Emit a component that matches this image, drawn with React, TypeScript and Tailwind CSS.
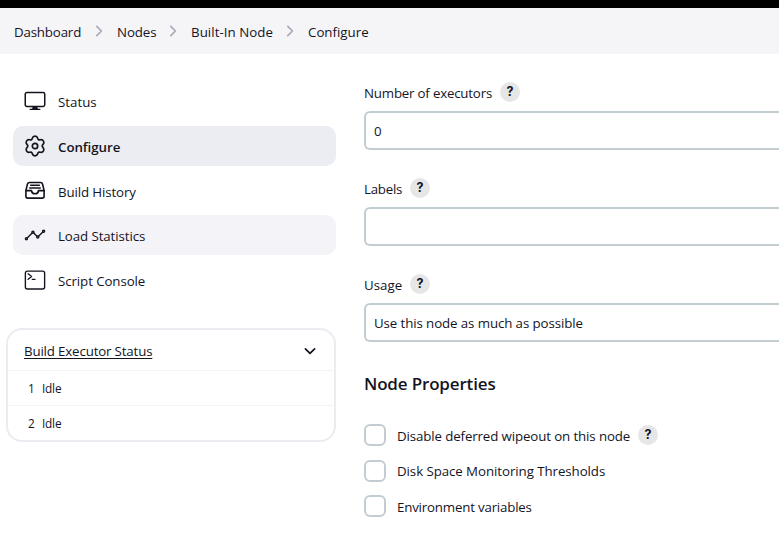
import type { ReactNode } from "react";
import { IoAnalyticsOutline, IoTerminalOutline } from "react-icons/io5";

const crumbs = [
  { label: "Dashboard", className: "w-[67px] tracking-[-0.17px]" },
  { label: "Nodes", className: "w-[38px] tracking-[-0.1px]" },
  { label: "Built-In Node", className: "w-[81px] tracking-[0.05px]" },
  { label: "Configure", className: "w-[60px]" },
];

function Monitor({ className }: { className?: string }) {
  return (
    <svg viewBox="0 0 22 22" fill="none" stroke="currentColor" strokeLinecap="round" strokeLinejoin="round" className={className}>
      <rect x="1.25" y="2.6" width="19.5" height="13.8" rx="1.7" strokeWidth="1.5" />
      <path d="M6.2 19.4h9.6" strokeWidth="1.3" />
      <path d="M9 17l-.4 2h4.8l-.4-2z" fill="currentColor" strokeWidth="0.8" />
    </svg>
  );
}

// Six rounded lobes around the centre of a 22 by 22 box.
function gearOutline() {
  const lobe = [[8.9, 3.9], [7.6, 1.2], [11, 1.2], [14.4, 1.2], [13.1, 3.9], [14.6, 4.76]];
  let path = "M7.4 4.76";
  for (let k = 0; k < 6; k++) {
    const a = (k * Math.PI) / 3;
    const pts = lobe.map(([x, y]) => {
      const dx = x - 11;
      const dy = y - 11;
      const px = 11 + dx * Math.cos(a) - dy * Math.sin(a);
      const py = 11 + dx * Math.sin(a) + dy * Math.cos(a);
      return px.toFixed(2) + " " + py.toFixed(2);
    });
    path += "C" + pts.join(" ");
  }
  return path + "Z";
}

const gearPath = gearOutline();

function Gear({ className }: { className?: string }) {
  return (
    <svg viewBox="0 0 22 22" fill="none" stroke="currentColor" strokeWidth="1.7" strokeLinejoin="round" className={className}>
      <path d={gearPath} />
      <circle cx="11" cy="11" r="2.7" />
    </svg>
  );
}

function Tray({ className }: { className?: string }) {
  return (
    <svg viewBox="0 -0.6 22 22" fill="none" stroke="currentColor" strokeWidth="1.6" strokeLinecap="round" strokeLinejoin="round" className={className}>
      <path d="M1.9 11 3.4 4.6Q3.8 2.9 5.5 2.9h11q1.7 0 2.1 1.7L20.1 11v5.6q0 1.9-1.9 1.9H3.8q-1.9 0-1.9-1.9z" />
      <path d="M1.9 11h5.6q.3 3.2 3.5 3.2t3.5-3.2h5.6" />
      <path d="M6.6 5.7h8.8M5.7 8.4h10.6" strokeWidth="1.4" />
    </svg>
  );
}

function Chevron({ className }: { className?: string }) {
  return (
    <svg viewBox="0 0 14 14" fill="none" stroke="currentColor" strokeWidth="1.7" strokeLinecap="round" strokeLinejoin="round" className={className}>
      <path d="M4.8 2.4 9.4 7l-4.6 4.6" />
    </svg>
  );
}

const tasks = [
  { label: "Status", icon: Monitor, className: "" },
  { label: "Configure", icon: Gear, className: "bg-[#ecedf2] font-semibold tracking-[-0.05px]" },
  { label: "Build History", icon: Tray, className: "tracking-[-0.12px]" },
  { label: "Load Statistics", icon: IoAnalyticsOutline, className: "bg-[#f3f3f8] tracking-[-0.09px]" },
  { label: "Script Console", icon: IoTerminalOutline, className: "tracking-[-0.09px]" },
];

function Help() {
  return (
    <span className="flex size-5 shrink-0 items-center justify-center rounded-full bg-[#e6e6e7] pt-px font-[Inter] text-[12.5px] font-bold leading-none tracking-normal">
      ?
    </span>
  );
}

function Field({ label, labelClass, children }: { label: string; labelClass: string; children?: ReactNode }) {
  return (
    <div className="h-24">
      <div className="flex h-5 items-center">
        <span className={"pt-px " + labelClass}>{label}</span>
        <Help />
      </div>
      <div className="mt-[9px] flex h-[39px] items-center rounded-l-md border-2 border-r-0 border-[#c3cdd1] pl-2 pt-px tracking-[-0.1px]">
        {children}
      </div>
    </div>
  );
}

function Check({ label, labelClass, help }: { label: string; labelClass: string; help?: boolean }) {
  return (
    <div className="flex h-[22px] items-center">
      <span className="size-[22px] shrink-0 rounded-md border-2 border-[#c3cdd1]" />
      <span className={"ml-[11px] pt-px " + labelClass}>{label}</span>
      {help && <Help />}
    </div>
  );
}

export default function App() {
  return (
    <div className="h-[537px] w-[779px] overflow-hidden whitespace-nowrap bg-white font-['Open_Sans','Noto_Sans',sans-serif] text-[13.3px] leading-5 text-[#14141f]">
      <div className="h-2 bg-black" />
      <nav className="flex h-[46px] items-center bg-[#f5f5f8] pl-3.5">
        {crumbs.map((crumb, i) => (
          <div key={crumb.label} className="flex items-center">
            {i > 0 && (
              <span className="flex w-9 justify-center">
                <Chevron className="size-3.5 text-[#a9a9b8]" />
              </span>
            )}
            <span className={crumb.className + " pt-px"}>{crumb.label}</span>
          </div>
        ))}
      </nav>
      <div className="flex">
        <aside className="w-[364px] shrink-0 pt-[27px]">
          <div className="ml-[13px] flex w-[323px] flex-col gap-[4.7px]">
            {tasks.map(({ label, icon: Icon, className }) => (
              <div key={label} className={"flex h-10 items-center rounded-[10px] pl-[11px] " + className}>
                <Icon className="size-[22px]" />
                <span className="ml-3 pt-[2.5px]">{label}</span>
              </div>
            ))}
          </div>
          <section className="ml-1.5 mt-7 h-[114px] w-[330px] rounded-2xl border-2 border-[#ecebf1]">
            <div className="flex h-10 items-center justify-between pl-4 pr-[17px] pt-0.5">
              <span className="tracking-[-0.16px] underline underline-offset-2">Build Executor Status</span>
              <Chevron className="size-3.5 rotate-90" />
            </div>
            <div className="flex h-[35px] items-center border-t border-[#f3f3f6] pl-5 text-[11.8px] tracking-[-0.2px]">
              <span className="w-3.5">1</span>Idle
            </div>
            <div className="flex h-[35px] items-center border-t border-[#f3f3f6] pl-5 text-[11.8px] tracking-[-0.2px]">
              <span className="w-3.5">2</span>Idle
            </div>
          </section>
        </aside>
        <main className="min-w-0 flex-1 pt-7">
          <Field label="Number of executors" labelClass="w-[136px] tracking-[-0.2px]">0</Field>
          <Field label="Labels" labelClass="w-[46px] tracking-[-0.25px]" />
          <Field label="Usage" labelClass="w-[46px]">Use this node as much as possible</Field>
          <h2 className="mt-[2px] text-[17px] font-semibold leading-6 tracking-[-0.16px]">Node Properties</h2>
          <div className="mt-[28px] flex flex-col gap-[13.5px]">
            <Check label="Disable deferred wipeout on this node" labelClass="w-[241px] tracking-[-0.12px]" help />
            <Check label="Disk Space Monitoring Thresholds" labelClass="tracking-[-0.07px]" />
            <Check label="Environment variables" labelClass="tracking-[-0.19px]" />
          </div>
        </main>
      </div>
    </div>
  );
}
